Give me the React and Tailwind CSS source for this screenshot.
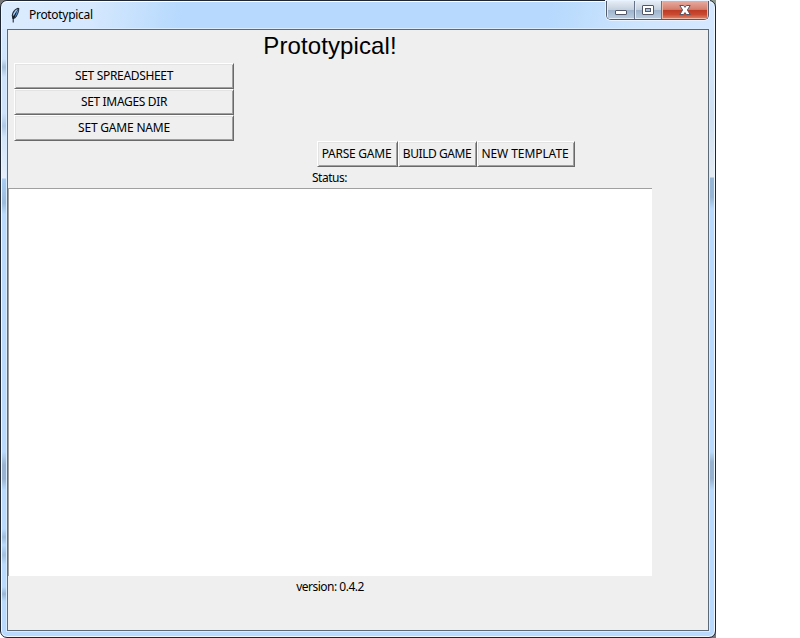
import React from "react";

const bevel =
  "flex items-center justify-center h-[26px] shrink-0 bg-[#efefef] border border-t-white border-l-white border-b-[#696969] border-r-[#696969] shadow-[inset_1px_1px_0_#e3e3e3,inset_-1px_-1px_0_#a0a0a0] whitespace-nowrap";

function Button({ className, textClass, children }) {
  return (
    <button className={`${bevel} ${className}`}>
      <span className={`block shrink-0 leading-4 ${textClass}`}>{children}</span>
    </button>
  );
}

function Feather() {
  return (
    <svg width="16" height="16" viewBox="0 0 16 16" className="shrink-0">
      <path d="M10 .8C6.5 1.8 4 5 3.8 8.5L4.3 12L7 11.5C9.8 8.5 11.5 4.5 11.3 1.2Z" fill="#202936" />
      <path d="M9.3 2C6.8 3.5 5 6 4.8 9L6.3 8L9.6 2.6Z" fill="#a9cdf0" />
      <path d="M10.5 2.2C10 5.5 8.6 8.4 6.4 10.8L7 7.2Z" fill="#5a9ade" />
      <path d="M8.2 5.5L5.2 12V15.5" fill="none" stroke="#111820" strokeWidth="1" />
    </svg>
  );
}

function CaptionButtons() {
  return (
    <div className="-mt-px flex h-[19px] w-[103px] overflow-hidden rounded-b-[5px] border border-t-0 border-[#525a6b] shadow-[0_0_0_1px_#e8f3ff]">
      <div className="flex w-[28px] justify-center border-r border-[#66738a] bg-[linear-gradient(#e6edf5_0%,#c5d1df_48%,#9eb3cb_50%,#bacde2_100%)] shadow-[inset_1px_-1px_0_#e4edf6]">
        <svg width="14" height="18" viewBox="0 0 14 18">
          <rect x="1.5" y="9.5" width="11" height="4" rx=".5" fill="#fff" stroke="#535666" />
        </svg>
      </div>
      <div className="flex w-[27px] justify-center border-r border-[#66738a] bg-[linear-gradient(#e6edf5_0%,#c5d1df_48%,#9eb3cb_50%,#bacde2_100%)] shadow-[inset_1px_-1px_0_#e4edf6]">
        <svg width="14" height="18" viewBox="0 0 14 18">
          <rect x="1.5" y="4.5" width="11" height="9" rx=".5" fill="#fff" stroke="#535666" />
          <rect x="4.5" y="7.5" width="5" height="3" fill="#a9c2db" stroke="#535666" />
        </svg>
      </div>
      <div className="flex w-[46px] justify-center bg-[linear-gradient(#e8aca0_0%,#d47d6d_47%,#bd3a25_50%,#ca4a31_75%,#df8970_100%)] shadow-[inset_1px_-1px_0_#eeb8a6,inset_-1px_0_0_#eeb8a6]">
        <svg width="14" height="18" viewBox="0 0 14 18">
          <path
            d="M1.8 4.5H5.6L7 6.4L8.4 4.5H12.2L9.4 9L12.2 13.5H8.4L7 11.6L5.6 13.5H1.8L4.6 9Z"
            fill="#fff"
            stroke="#535666"
            strokeLinejoin="round"
          />
        </svg>
      </div>
    </div>
  );
}

export default function App() {
  return (
    <div className="h-[638px] w-[800px] overflow-hidden bg-white font-['Noto_Sans','Open_Sans',sans-serif] text-[12px] text-black">
      <div className="h-[638px] w-[716px] bg-[linear-gradient(135deg,#777_0_8px,transparent_8px),linear-gradient(225deg,#8d988f_0_8px,transparent_8px),linear-gradient(315deg,#777_0_8px,transparent_8px)]">
        <div className="relative flex h-full w-full flex-col rounded-[7px] border border-[#1f2633] bg-[#b9dafc] px-[6px] pb-[6px] shadow-[inset_0_0_0_1px_#eef7ff]">
          <div className="absolute inset-y-[6px] left-[1px] w-[4px] bg-[linear-gradient(#d9eafd_0,#d0e5fc_52px,#a7bfd9_60px,#cfe4fb_70px,#cfe4fb_106px,#afc8e4_119px,#d3e5f8_130px,#e6eef8_171px,#a9cdf4_172px,#9bbbdc_196px,#b9dafc_207px,#b9dafc_445px,#9ab3d0_458px,#9ab3d0_472px,#b9dafc_483px,#b9dafc_522px,#9fbcdc_530px,#b9dafc_538px,#a1bfdf_548px,#b9dafc_557px,#b9dafc_580px,#9ab6d6_587px,#b9dafc_594px)]" />
          <div className="absolute inset-y-[6px] right-[1px] w-[4px] bg-[linear-gradient(#d3e8fe_0,#d3e8fe_40px,#cfe0f2_110px,#e4ebf2_170px,#97b5d4_171px,#97b5d4_190px,#b9dafc_202px,#b9dafc_445px,#97b2cf_455px,#97b2cf_472px,#b9dafc_483px)]" />
          <div className="relative -mx-[5px] flex h-[28px] shrink-0 justify-between rounded-t-[6px] border-t border-white bg-[linear-gradient(100deg,#dcecff_0,#d5e8fe_90px,#b6d9fd_180px,#b6d9fd_540px,#d0e6fe_640px,#d5e8fe_100%)] pl-[6px] pr-[5px]">
            <div className="flex items-start gap-[5px] pt-[5px]">
              <Feather />
              <span className="block leading-4 tracking-[-0.3px]">Prototypical</span>
            </div>
            <CaptionButtons />
          </div>
          <div className="relative flex h-[602px] w-[702px] shrink-0 flex-col border border-[#5c6977] bg-[#efefef] shadow-[0_0_0_1px_#d9ecff]">
            <h1 className="h-[33px] w-[644px] text-center font-['Liberation_Sans',Arial,sans-serif] text-[24px] leading-[32px] tracking-[0.1px]">
              Prototypical!
            </h1>
            <div className="ml-[6px] flex w-[220px] flex-col">
              <Button className="w-full" textClass="tracking-[-0.33px]">SET SPREADSHEET</Button>
              <Button className="w-full" textClass="tracking-[-0.33px]">SET IMAGES DIR</Button>
              <Button className="w-full" textClass="tracking-[-0.2px]">SET GAME NAME</Button>
            </div>
            <div className="ml-[309px] flex">
              <Button className="w-[81px] pr-[2px]" textClass="tracking-[-0.25px]">PARSE GAME</Button>
              <Button className="w-[79px] pr-px" textClass="tracking-[-0.45px]">BUILD GAME</Button>
              <Button className="w-[98px] pr-[2px]" textClass="tracking-[-0.07px]">NEW TEMPLATE</Button>
            </div>
            <div className="h-[21px] w-[644px] pl-[304px] pt-[3px] leading-4 tracking-[-0.5px]">Status:</div>
            <div className="h-[388px] w-[644px] border-l border-t border-[#a0a0a0] bg-white" />
            <div className="w-[644px] pt-[3px] text-center leading-4 tracking-[-0.5px]">version: 0.4.2</div>
          </div>
        </div>
      </div>
    </div>
  );
}
